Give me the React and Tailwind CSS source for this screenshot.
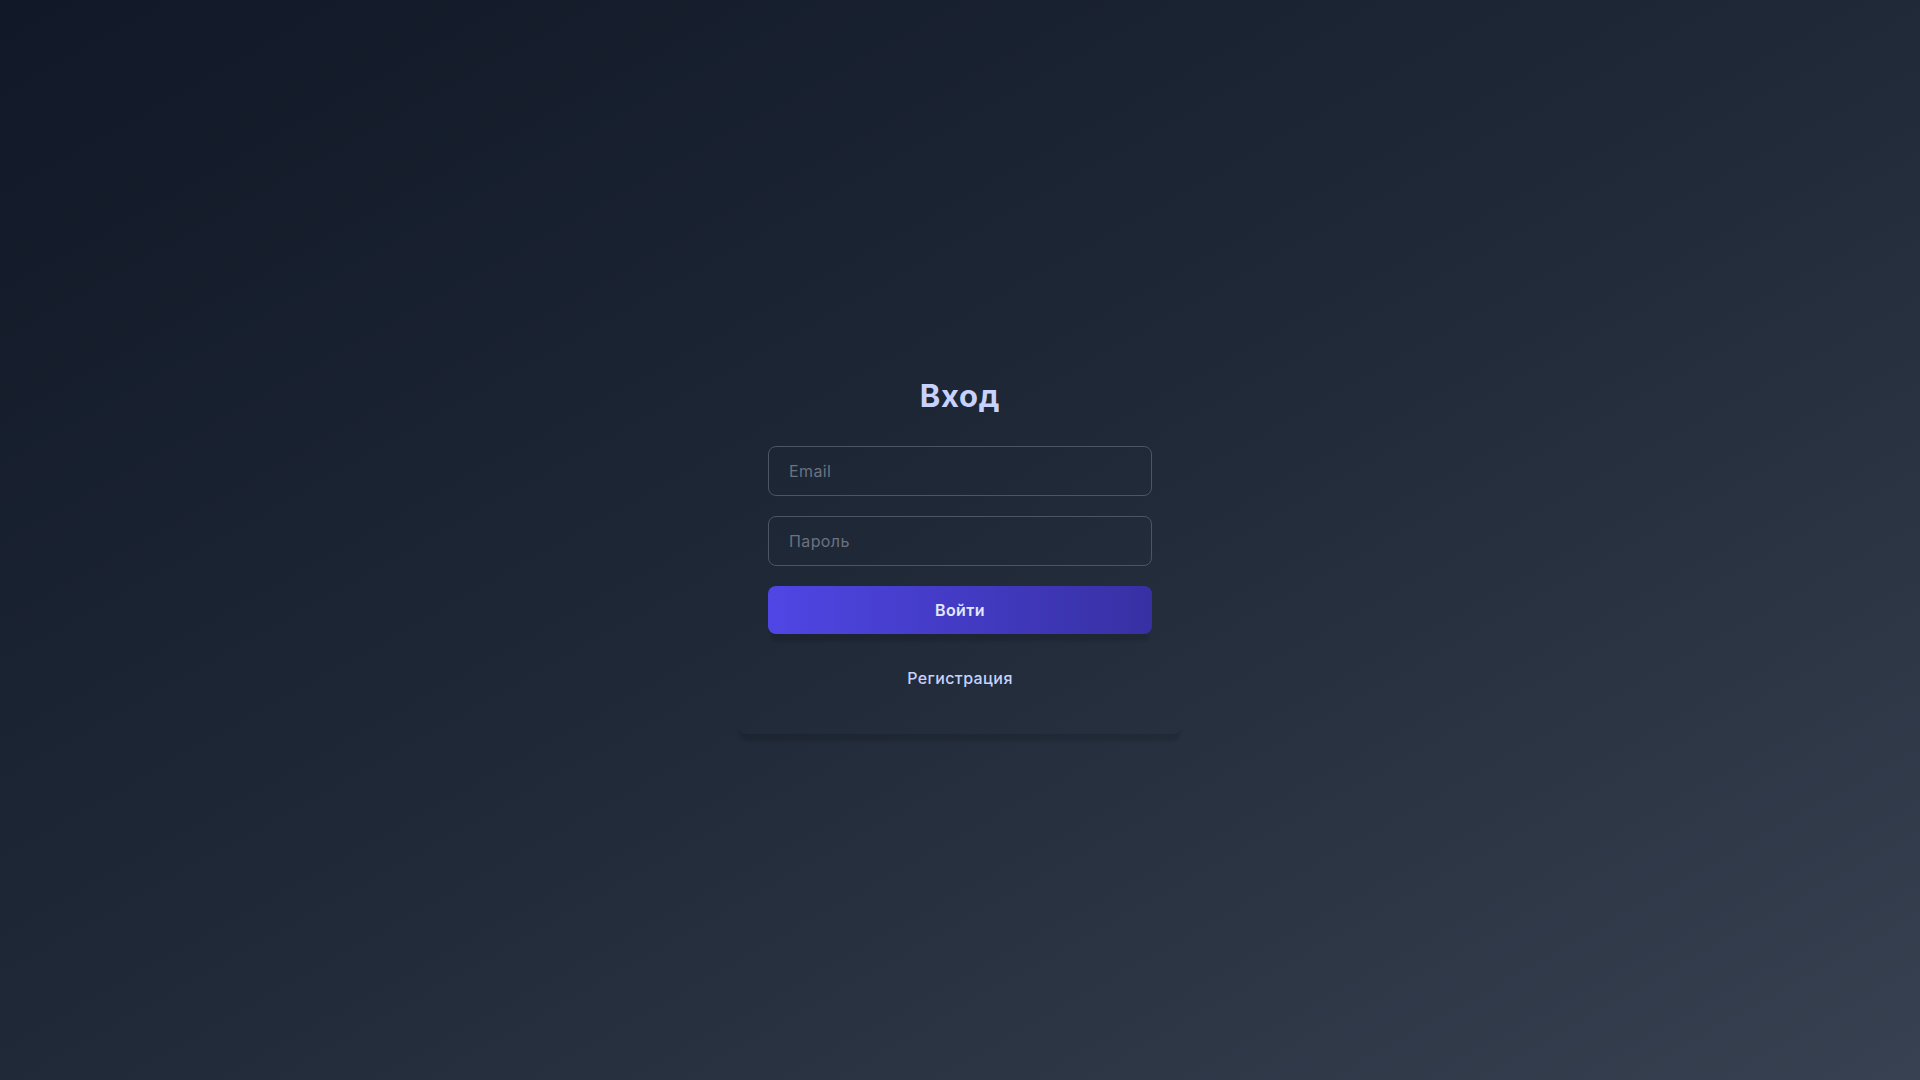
export default function App() {
  return (
    <div className="min-h-screen flex items-center justify-center bg-gradient-to-br from-[#111827] via-[#1f2937] to-[#374151] px-4 font-['Inter',_'Noto_Sans',_sans-serif]">
      <div className="w-full max-w-md rounded-xl shadow-[0_10px_3px_-3px_rgba(0,0,0,0.12)] p-8">
        <h1 className="text-[31px] leading-9 font-bold tracking-wide text-[#c7d2fe] text-center mb-8">Вход</h1>
        <form className="flex flex-col gap-5" onSubmit={(e) => e.preventDefault()}>
          <input
            type="email"
            placeholder="Email"
            className="w-full px-5 py-3 text-base bg-transparent border border-[#4b5563] rounded-lg text-gray-100 placeholder-[#6b7280] outline-none tracking-wide"
          />
          <input
            type="password"
            placeholder="Пароль"
            className="w-full px-5 py-3 text-base bg-transparent border border-[#4b5563] rounded-lg text-gray-100 placeholder-[#6b7280] outline-none tracking-wide"
          />
          <button
            type="submit"
            className="w-full py-3 text-base font-semibold tracking-wide text-[#e0e7ff] rounded-lg bg-gradient-to-r from-[#4f46e5] to-[#3730a3] shadow-[0_10px_3px_-3px_rgba(0,0,0,0.12)]"
          >
            Войти
          </button>
        </form>
        <div className="mt-5 text-center">
          <button className="py-3 text-base font-medium tracking-wide text-[#c7d2fe]">Регистрация</button>
        </div>
      </div>
    </div>
  );
}
